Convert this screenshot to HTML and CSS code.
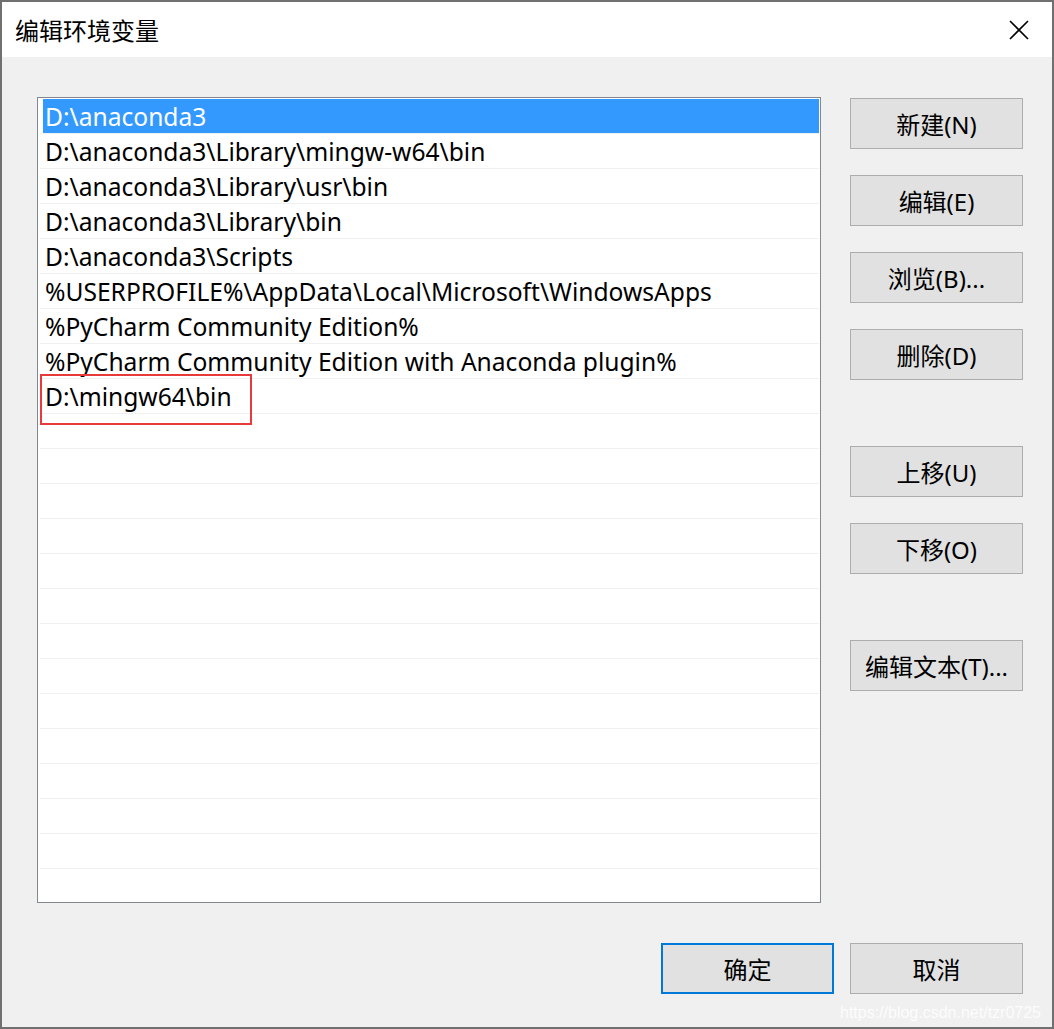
FILE: index.html
```html
<!DOCTYPE html>
<html lang="zh-CN">
<head>
    <meta charset="UTF-8">
    <title>编辑环境变量</title>
    <link rel="stylesheet" href="styles.css">
</head>
<body>

<div class="dialog">
    <div class="title-bar">
        <span class="title">编辑环境变量</span>
        <svg class="close" width="20" height="20" viewBox="0 0 20 20">
            <path d="M1 1 L19 19 M19 1 L1 19" stroke="#000" stroke-width="1.6" fill="none"/>
        </svg>
    </div>

    <div class="content">
        <div class="path-list">
            <div class="row selected"><div class="cell">D:\anaconda3</div></div>
            <div class="row"><div class="cell">D:\anaconda3\Library\mingw-w64\bin</div></div>
            <div class="row"><div class="cell">D:\anaconda3\Library\usr\bin</div></div>
            <div class="row"><div class="cell">D:\anaconda3\Library\bin</div></div>
            <div class="row"><div class="cell">D:\anaconda3\Scripts</div></div>
            <div class="row"><div class="cell">%USERPROFILE%\AppData\Local\Microsoft\WindowsApps</div></div>
            <div class="row"><div class="cell">%PyCharm Community Edition%</div></div>
            <div class="row"><div class="cell">%PyCharm Community Edition with Anaconda plugin%</div></div>
            <div class="row"><div class="cell">D:\mingw64\bin</div><span class="mark"></span></div>
            <div class="row"><div class="cell"></div></div>
            <div class="row"><div class="cell"></div></div>
            <div class="row"><div class="cell"></div></div>
            <div class="row"><div class="cell"></div></div>
            <div class="row"><div class="cell"></div></div>
            <div class="row"><div class="cell"></div></div>
            <div class="row"><div class="cell"></div></div>
            <div class="row"><div class="cell"></div></div>
            <div class="row"><div class="cell"></div></div>
            <div class="row"><div class="cell"></div></div>
            <div class="row"><div class="cell"></div></div>
            <div class="row"><div class="cell"></div></div>
            <div class="row"><div class="cell"></div></div>
            <div class="row"><div class="cell"></div></div>
        </div>

        <div class="side-buttons">
            <button class="btn">新建(N)</button>
            <button class="btn">编辑(E)</button>
            <button class="btn">浏览(B)...</button>
            <button class="btn">删除(D)</button>
            <button class="btn group">上移(U)</button>
            <button class="btn">下移(O)</button>
            <button class="btn group">编辑文本(T)...</button>
        </div>
    </div>

    <div class="footer">
        <button class="btn default">确定</button>
        <button class="btn">取消</button>
    </div>

    <span class="watermark">https://blog.csdn.net/tzr0725</span>
</div>

</body>
</html>
```

FILE: styles.css
```css
body {
    margin: 0;
    font-family: "Noto Sans", "Noto Sans CJK SC", sans-serif;
    background-color: #f0f0f0;
}
.dialog {
    position: relative;
    width: 1054px;
    height: 1029px;
    box-sizing: border-box;
    border: 2px solid #707070;
    background-color: #f0f0f0;
}
.title-bar {
    height: 55px;
    background-color: #fff;
    display: flex;
    align-items: center;
    justify-content: space-between;
    padding: 0 23px 0 13px;
}
.title {
    font-family: "Noto Sans CJK SC", sans-serif;
    font-size: 24px;
    color: #000;
}
.content {
    display: flex;
    gap: 29px;
    padding: 40px 29px 0 35px;
}
.path-list {
    width: 784px;
    height: 806px;
    box-sizing: border-box;
    border: 1px solid #828790;
    background-color: #fff;
    padding: 1px 1px 0 2px;
    overflow: hidden;
}
.row {
    position: relative;
    height: 35px;
    box-sizing: border-box;
    border-bottom: 1px solid #f0f0f0;
    padding-left: 3px;
}
.cell {
    height: 34px;
    line-height: 35px;
    padding-left: 2px;
    font-size: 24.6px;
    color: #000;
    white-space: nowrap;
}
.selected .cell {
    background-color: #3399ff;
    color: #fff;
}
.mark {
    position: absolute;
    left: 0;
    top: -5px;
    width: 212px;
    height: 51px;
    box-sizing: border-box;
    border: 2px solid #e83a3a;
}
.side-buttons {
    display: flex;
    flex-direction: column;
    gap: 26px;
    padding-top: 1px;
}
.btn {
    width: 173px;
    height: 51px;
    box-sizing: border-box;
    border: 1px solid #adadad;
    background-color: #e1e1e1;
    font-family: "Noto Sans", "Noto Sans CJK SC", sans-serif;
    font-size: 24px;
    color: #000;
    padding: 0;
}
.side-buttons .group {
    margin-top: 40px;
}
.footer {
    display: flex;
    justify-content: flex-end;
    gap: 16px;
    padding: 40px 29px 0 0;
}
.btn.default {
    border: 2px solid #0078d7;
}
.watermark {
    position: absolute;
    right: 11px;
    bottom: 5px;
    font-family: "Liberation Sans", sans-serif;
    font-size: 16px;
    color: rgba(255, 255, 255, 0.85);
}
```
